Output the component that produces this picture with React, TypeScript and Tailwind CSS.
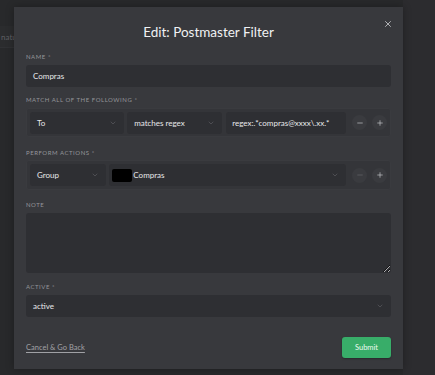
import { Minus, Plus, ChevronDown, X } from "lucide-react";

function Select({ value, className = "" }: { value: string; className?: string }) {
  return (
    <div
      className={`flex items-center justify-between h-[22px] rounded-[3px] bg-[#2e2f33] pl-[7px] pr-[7px] text-[8px] text-[#e8e9eb] ${className}`}
    >
      <span>{value}</span>
      <ChevronDown size={8} strokeWidth={1.5} className="text-[#6c6d72]" />
    </div>
  );
}

function RoundBtn({ children, dim }: { children: React.ReactNode; dim?: boolean }) {
  return (
    <div
      className={`flex items-center justify-center w-[15px] h-[15px] rounded-full bg-[#3a3b3f] ${dim ? "text-[#66676b]" : "text-[#c9cacd]"}`}
    >
      {children}
    </div>
  );
}

function Label({ children, mb = "mb-[4px]" }: { children: React.ReactNode; mb?: string }) {
  return (
    <div className={`h-[8px] text-[6px] tracking-[0.09em] uppercase text-[#94959a] leading-[8px] ${mb}`}>
      {children}
    </div>
  );
}

export default function App() {
  return (
    <div
      className="relative w-[435px] h-[375px] overflow-hidden bg-[#28292b]"
      style={{ fontFamily: "Lato, 'Open Sans', sans-serif" }}
    >
      {/* page behind the dialog */}
      <div className="absolute left-0 top-[26px] w-full h-[22px] bg-[#2b2c2e] border-b border-[#303134]">
        <span className="absolute left-[1px] top-[5px] text-[8px] text-[#5f6064]">natu</span>
      </div>
      <div className="absolute right-0 top-0 w-[32px] h-full bg-[#2c2c2f]" />

      {/* dialog */}
      <div className="absolute left-[14px] top-[7px] w-[389px] h-[362px] bg-[#38393d] px-[12px] shadow-[0_0_8px_rgba(0,0,0,0.3)]">
        <button className="absolute right-[10px] top-[12px] text-[#c8c9cc]">
          <X size={10} strokeWidth={2} />
        </button>
        <h1 className="pt-[15px] text-center text-[13.5px] text-[#f0f1f3] leading-[20px]">
          Edit: Postmaster Filter
        </h1>

        <div className="mt-[11px]">
          <Label>Name *</Label>
          <div className="flex items-center h-[22px] rounded-[3px] bg-[#2e2f33] px-[7px] text-[8px] text-[#e8e9eb]">
            Compras
          </div>
        </div>

        <div className="mt-[9px]">
          <Label>Match all of the following *</Label>
          <div className="flex items-center gap-[3px] h-[29px] rounded-[3px] bg-[#343539] px-[3px] border border-[#3a3b3f]">
            <Select value="To" className="w-[95px]" />
            <Select value="matches regex" className="w-[96px]" />
            <div className="flex items-center h-[22px] w-[121px] rounded-[3px] bg-[#2e2f33] pl-[6px] text-[8px] text-[#e8e9eb] ml-[1px]">
              regex:.*compras@xxxx\.xx.*
            </div>
            <div className="flex gap-[5px] ml-[3px]">
              <RoundBtn>
                <Minus size={8} strokeWidth={2} />
              </RoundBtn>
              <RoundBtn>
                <Plus size={8} strokeWidth={2} />
              </RoundBtn>
            </div>
          </div>
        </div>

        <div className="mt-[12px]">
          <Label mb="mb-[3px]">Perform actions *</Label>
          <div className="flex items-center gap-[3px] h-[30px] rounded-[3px] bg-[#343539] px-[3px] border border-[#3a3b3f]">
            <Select value="Group" className="w-[77px]" />
            <div className="flex items-center justify-between h-[22px] w-[239px] rounded-[3px] bg-[#2e2f33] pl-[3px] pr-[7px] text-[8px] text-[#e8e9eb]">
              <div className="flex items-center gap-[1px]">
                <span className="inline-block w-[20px] h-[13px] bg-black rounded-[2px]" />
                <span>Compras</span>
              </div>
              <ChevronDown size={8} strokeWidth={1.5} className="text-[#6c6d72]" />
            </div>
            <div className="flex gap-[5px] ml-[3px]">
              <RoundBtn dim>
                <Minus size={8} strokeWidth={2} />
              </RoundBtn>
              <RoundBtn>
                <Plus size={8} strokeWidth={2} />
              </RoundBtn>
            </div>
          </div>
        </div>

        <div className="mt-[11px]">
          <Label>Note</Label>
          <textarea className="block w-full h-[60px] rounded-[3px] bg-[#2e2f33] outline-none resize-y" />
        </div>

        <div className="mt-[10px]">
          <Label>Active *</Label>
          <Select value="active" />
        </div>

        <div className="flex items-center justify-between mt-[20px]">
          <a className="text-[7.5px] text-[#a0a1a5] underline underline-offset-2">Cancel &amp; Go Back</a>
          <button className="h-[21px] w-[49px] rounded-[3px] bg-[#38ad69] text-[7.5px] text-[#eafbf0] shadow-[0_1px_2px_rgba(0,0,0,0.3)]">
            Submit
          </button>
        </div>
      </div>
    </div>
  );
}
